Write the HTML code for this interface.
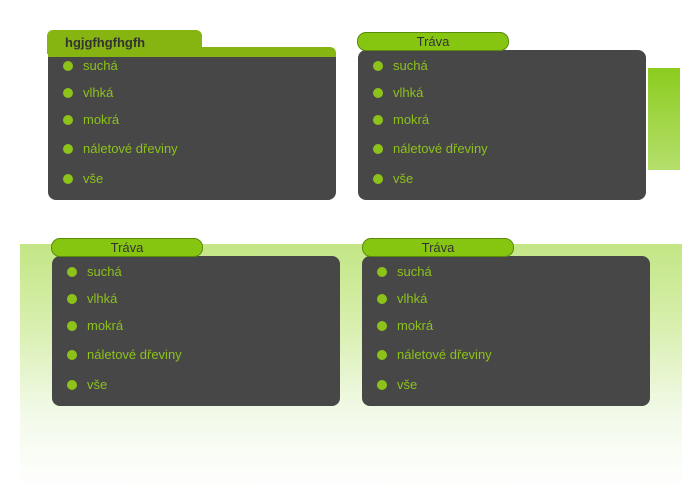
<!DOCTYPE html>
<html><head><meta charset="utf-8"><style>
body{margin:0;width:700px;height:500px;background:#fff;position:relative;overflow:hidden;font-family:"Liberation Sans",sans-serif}
.bg{position:absolute;left:20px;top:244px;width:662px;height:246px;background:linear-gradient(#c3e685 0%,#d6eeaa 30%,#f3faea 70%,#fff 100%)}
.strip{position:absolute;left:648px;top:68px;width:32px;height:102px;background:linear-gradient(#8ccc1f,#b5df6c)}
.panel{position:absolute;width:288px;height:150px;background:#474747;border-radius:8px}
.row{position:absolute;left:35px;color:#8cc21a;font-size:13px;line-height:16px}
.row:before{content:"";position:absolute;left:-20px;top:3px;width:10px;height:10px;border-radius:50%;background:#8cc21a}
.tab{position:absolute;width:150px;height:17px;background:#86c611;border:1px solid #5a8a0c;border-radius:9px;text-align:center;font-size:13px;line-height:17px;color:#333}
.tab1{position:absolute;left:47px;top:30px;width:155px;height:24px;background:#86b511;border-radius:6px 6px 0 0;font-weight:bold;font-size:13px;color:#333;padding-left:18px;box-sizing:border-box;line-height:26px}
.band{position:absolute;left:48px;top:47px;width:288px;height:10px;background:#86b511;border-radius:0 6px 0 0}
</style></head><body>
<div class="bg"></div>
<div class="strip"></div>

<div class="panel" style="left:48px;top:50px">
<div class="row" style="top:8px">suchá</div><div class="row" style="top:35px">vlhká</div><div class="row" style="top:62px">mokrá</div><div class="row" style="top:91px">náletové dřeviny</div><div class="row" style="top:121px">vše</div></div>
<div class="band"></div>
<div class="tab1">hgjgfhgfhgfh</div>

<div class="panel" style="left:358px;top:50px">
<div class="row" style="top:8px">suchá</div><div class="row" style="top:35px">vlhká</div><div class="row" style="top:62px">mokrá</div><div class="row" style="top:91px">náletové dřeviny</div><div class="row" style="top:121px">vše</div></div>
<div class="tab" style="left:357px;top:32px">Tráva</div>

<div class="panel" style="left:52px;top:256px">
<div class="row" style="top:8px">suchá</div><div class="row" style="top:35px">vlhká</div><div class="row" style="top:62px">mokrá</div><div class="row" style="top:91px">náletové dřeviny</div><div class="row" style="top:121px">vše</div></div>
<div class="tab" style="left:51px;top:238px">Tráva</div>

<div class="panel" style="left:362px;top:256px">
<div class="row" style="top:8px">suchá</div><div class="row" style="top:35px">vlhká</div><div class="row" style="top:62px">mokrá</div><div class="row" style="top:91px">náletové dřeviny</div><div class="row" style="top:121px">vše</div></div>
<div class="tab" style="left:362px;top:238px">Tráva</div>
</body></html>
